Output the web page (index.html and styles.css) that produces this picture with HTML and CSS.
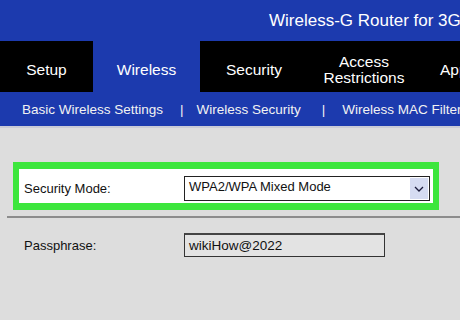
FILE: index.html
```html
<!DOCTYPE html>
<html lang="en">
<head>
  <meta charset="UTF-8" />
  <meta name="viewport" content="width=device-width, initial-scale=1.0" />
  <title>Wireless Security</title>
  <link rel="stylesheet" href="styles.css">
</head>
<body>
  <header class="top">
    <div class="product">Wireless-G Router for 3G</div>
  </header>

  <nav class="tabs">
    <a class="tab tab-setup">Setup</a>
    <a class="tab tab-wireless active">Wireless</a>
    <a class="tab tab-security">Security</a>
    <a class="tab tab-access">Access<br>Restrictions</a>
    <a class="tab tab-apps">Applications &amp; Gaming</a>
  </nav>

  <div class="subnav">
    <a>Basic Wireless Settings</a>
    <span class="sep sep-first">|</span>
    <a>Wireless Security</a>
    <span class="sep sep-second">|</span>
    <a>Wireless MAC Filter</a>
  </div>

  <main class="content">
    <div class="highlight">
      <div class="row mode-row">
        <label class="label">Security Mode:</label>
        <div class="select">
          <span class="select-value">WPA2/WPA Mixed Mode</span>
          <span class="select-btn">
            <svg width="10" height="6" viewBox="0 0 10 6"><path d="M1 1 L5 5 L9 1" fill="none" stroke="#1a1a3a" stroke-width="1.3"/></svg>
          </span>
        </div>
      </div>
    </div>

    <hr class="divider">

    <div class="row pass-row">
      <label class="label">Passphrase:</label>
      <div class="input">wikiHow@2022</div>
    </div>
  </main>
</body>
</html>
```

FILE: styles.css
```css
body, html {
  margin: 0;
  padding: 0;
  width: 460px;
  height: 320px;
  overflow: hidden;
  font-family: 'Liberation Sans', Arial, sans-serif;
  background: #dddddd;
}
.top {
  height: 41px;
  background: #1c3aae;
  display: flex;
  align-items: center;
  padding-left: 269px;
  white-space: nowrap;
}
.product {
  color: #fff;
  font-size: 17px;
  margin-top: 1px;
}
.tabs {
  display: flex;
  height: 51px;
  background: #000;
  white-space: nowrap;
}
.tab {
  display: flex;
  align-items: center;
  justify-content: center;
  text-align: center;
  padding-top: 6px;
  box-sizing: border-box;
  color: #fff;
  font-size: 15.5px;
  line-height: 16px;
  flex-shrink: 0;
}
.tab.active { background: #1c3aae; }
.tab-setup { width: 93px; }
.tab-wireless { width: 107px; }
.tab-security { width: 108px; }
.tab-access { width: 112px; }
.tab-apps { justify-content: flex-start; padding-left: 20px; }
.subnav {
  height: 34px;
  background: #1c3aae;
  display: flex;
  align-items: center;
  padding-left: 22px;
  white-space: nowrap;
  color: #f2f2f2;
  font-size: 13.5px;
  border-bottom: 2px solid #c9cbd6;
}
.sep-first { margin: 0 13px 0 17px; }
.sep-second { margin: 0 17px 0 21px; }
.content {
  padding-top: 34px;
}
.highlight {
  margin: 0 21px 0 13px;
  border: 7px solid #3ce63c;
  border-left-width: 6px;
  border-right-width: 6px;
  background: #fff;
}
.row {
  display: flex;
  align-items: center;
  font-size: 13px;
  color: #111;
}
.label {
  width: 160px;
  flex-shrink: 0;
}
.mode-row {
  padding: 7px 3px 2px 5px;
}
.select {
  flex: 1;
  height: 25px;
  box-sizing: border-box;
  border: 1px solid #222;
  display: flex;
  align-items: center;
  justify-content: space-between;
  padding: 0 1px 0 4px;
}
.select-value {
  margin-top: -4px;
}
.select-btn {
  width: 18px;
  height: 21px;
  background: #d6dcf2;
  display: flex;
  align-items: center;
  justify-content: center;
}
.divider {
  margin: 6px 0 0 7px;
  border: 0;
  border-top: 2px solid #8c8c8c;
}
.pass-row {
  padding: 15px 0 0 24px;
}
.input {
  width: 201px;
  height: 24px;
  box-sizing: border-box;
  border: 1px solid #333;
  border-top: 2px solid #444;
  background: #e3e3e3;
  padding-left: 4px;
  display: flex;
  align-items: center;
  font-size: 13.5px;
}
```
